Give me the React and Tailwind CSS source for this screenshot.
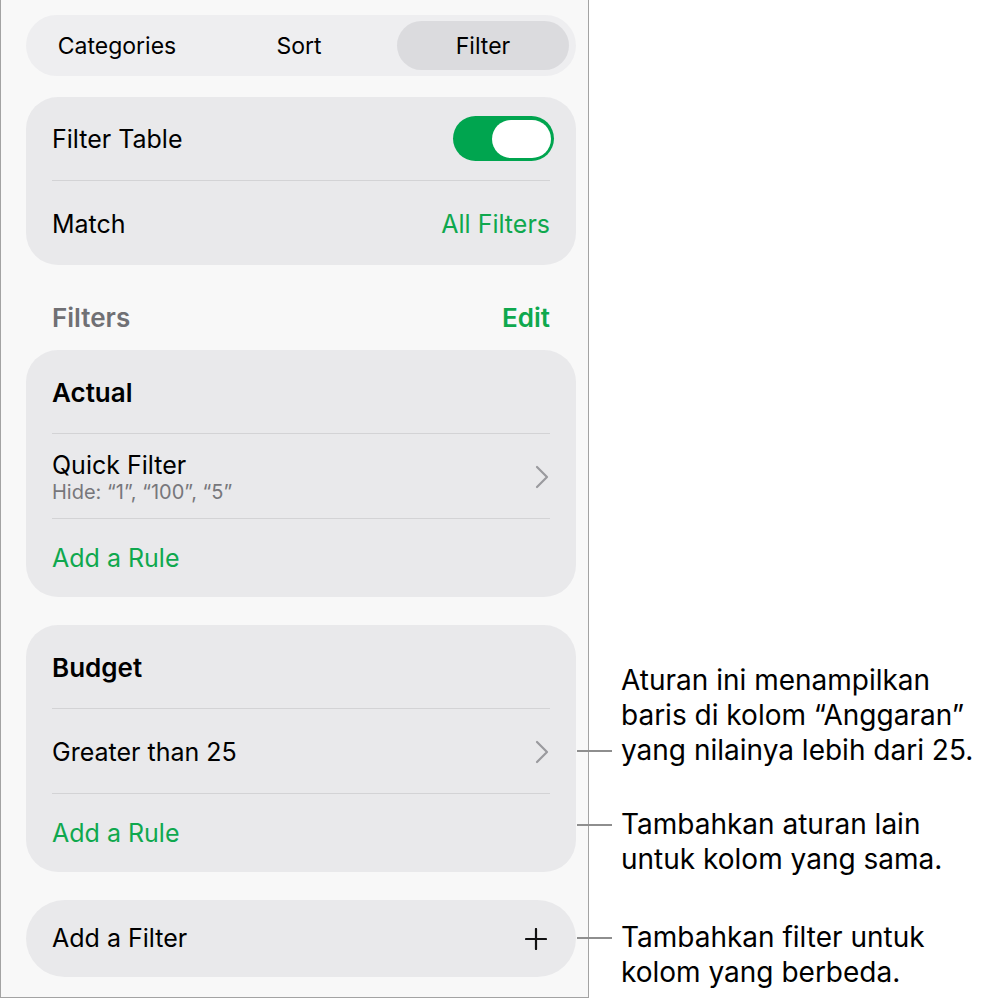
import React from "react";

const Divider = () => <div className="h-px bg-[#d3d3d5] mx-[26px]" />;

const Chevron = () => (
  <svg width="14" height="24" viewBox="0 0 14 24" fill="none" className="shrink-0">
    <path d="M2 2 L12 12 L2 22" stroke="#9a9a9e" strokeWidth="2.2" strokeLinecap="round" strokeLinejoin="round" />
  </svg>
);

const Plus = () => (
  <svg width="22" height="22" viewBox="0 0 22 22" fill="none" className="shrink-0">
    <path d="M11 1 V21 M1 11 H21" stroke="#111" strokeWidth="2.2" strokeLinecap="round" />
  </svg>
);

function FilterCard({ title, rule, sub }) {
  return (
    <div className="bg-[#e9e9eb] rounded-[32px] flex flex-col">
      <div className="h-[83px] flex items-center px-[26px] pt-px text-[26px] font-semibold text-black">{title}</div>
      <Divider />
      <div className="h-[84px] flex items-center justify-between pl-[26px] pr-[27px] pt-px">
        <div className="flex flex-col">
          <span className="text-[25px] text-black leading-[30px]">{rule}</span>
          {sub && <span className="text-[20px] text-[#77777b] leading-[24px]">{sub}</span>}
        </div>
        <Chevron />
      </div>
      <Divider />
      <div className="h-[78px] flex items-center px-[26px] pt-[2px] text-[25px] text-[#0fa84e]">Add a Rule</div>
    </div>
  );
}

export default function App() {
  return (
    <div className="relative w-[983px] h-[999px] bg-white" style={{ fontFamily: "Inter, 'Noto Sans', 'Liberation Sans', sans-serif" }}>
      <div className="w-[589px] h-[998px] bg-[#f8f8f8] border-l border-r border-b border-[#a3a3a3] pl-[25px] pr-[12px] pt-[15px] flex flex-col">
        {/* segmented */}
        <div className="h-[61px] bg-[#eeeef0] rounded-full flex items-center px-[6px] py-[6px] gap-[12px]">
          <div className="w-[170px] h-full flex items-center justify-center pt-[2px] text-[23px] text-black">Categories</div>
          <div className="w-[170px] h-full flex items-center justify-center pt-[2px] text-[23px] text-black">Sort</div>
          <div className="ml-px w-[172px] h-full flex items-center justify-center pt-[2px] text-[23px] text-black bg-[#dbdbde] rounded-full">Filter</div>
        </div>

        {/* card 1 */}
        <div className="mt-[21px] bg-[#e9e9eb] rounded-[32px] flex flex-col">
          <div className="h-[83px] flex items-center justify-between pl-[26px] pr-[22px]">
            <span className="text-[25px] text-black pt-[2px]">Filter Table</span>
            <div className="w-[101px] h-[45px] rounded-full bg-[#00a54f] flex items-center justify-end pr-[3px]">
              <div className="w-[59px] h-[38px] rounded-full bg-white" />
            </div>
          </div>
          <Divider />
          <div className="h-[84px] flex items-center justify-between px-[26px] pt-[3px]">
            <span className="text-[25px] text-black">Match</span>
            <span className="text-[25px] text-[#0fa84e]">All Filters</span>
          </div>
        </div>

        {/* header */}
        <div className="h-[85px] flex items-center justify-between px-[26px] pt-[19px]">
          <span className="text-[26px] font-semibold text-[#707074]">Filters</span>
          <span className="text-[26px] font-semibold text-[#0fa84e]">Edit</span>
        </div>

        <FilterCard title="Actual" rule="Quick Filter" sub={"Hide: \u201c1\u201d, \u201c100\u201d, \u201c5\u201d"} />
        <div className="h-[28px]" />
        <FilterCard title="Budget" rule="Greater than 25" />
        <div className="h-[28px]" />

        <div className="h-[77px] bg-[#e9e9eb] rounded-full flex items-center justify-between pl-[26px] pr-[29px]">
          <span className="text-[25px] text-black pt-px">Add a Filter</span>
          <Plus />
        </div>
      </div>

      {/* callouts */}
      <div className="absolute left-[577px] top-[663px] flex">
        <div className="w-[35px] h-[35px] flex items-center mt-[70px]"><div className="w-full h-[2px] bg-[#8e8e8e]" /></div>
        <div className="pl-[9px] flex flex-col text-[28px] leading-[35px] text-black whitespace-nowrap">
          <span>Aturan ini menampilkan</span>
          <span>baris di kolom {"\u201cAnggaran\u201d"}</span>
          <span>yang nilainya lebih dari 25.</span>
        </div>
      </div>
      <div className="absolute left-[577px] top-[807px] flex">
        <div className="w-[35px] h-[35px] flex items-center"><div className="w-full h-[2px] bg-[#8e8e8e]" /></div>
        <div className="pl-[9px] flex flex-col text-[28px] leading-[35px] text-black whitespace-nowrap">
          <span>Tambahkan aturan lain</span>
          <span>untuk kolom yang sama.</span>
        </div>
      </div>
      <div className="absolute left-[577px] top-[920px] flex">
        <div className="w-[35px] h-[35px] flex items-center"><div className="w-full h-[2px] bg-[#8e8e8e]" /></div>
        <div className="pl-[9px] flex flex-col text-[28px] leading-[35px] text-black whitespace-nowrap">
          <span>Tambahkan filter untuk</span>
          <span>kolom yang berbeda.</span>
        </div>
      </div>
    </div>
  );
}
